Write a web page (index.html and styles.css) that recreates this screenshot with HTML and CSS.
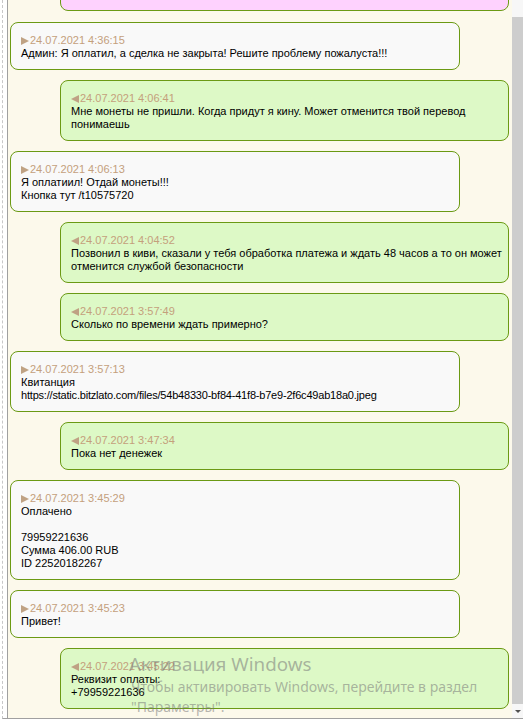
FILE: index.html
```html
<!DOCTYPE html>
<html lang="ru">
<head>
    <meta charset="UTF-8">
    <title>Сделка - чат</title>
    <link rel="stylesheet" href="styles.css">
</head>
<body>
    <div class="frame">
        <div class="rail"></div>
        <div class="chat">
            <div class="msg msg-system"></div>

            <div class="msg msg-in">
                <div class="time"><span class="dir"></span>24.07.2021 4:36:15</div>
                <div class="text">Админ: Я оплатил, а сделка не закрыта! Решите проблему пожалуста!!!</div>
            </div>
            <div class="msg msg-out">
                <div class="time"><span class="dir"></span>24.07.2021 4:06:41</div>
                <div class="text">Мне монеты не пришли. Когда придут я кину. Может отменится твой перевод понимаешь</div>
            </div>
            <div class="msg msg-in">
                <div class="time"><span class="dir"></span>24.07.2021 4:06:13</div>
                <div class="text">Я оплатиил! Отдай монеты!!!<br>Кнопка тут /t10575720</div>
            </div>
            <div class="msg msg-out">
                <div class="time"><span class="dir"></span>24.07.2021 4:04:52</div>
                <div class="text">Позвонил в киви, сказали у тебя обработка платежа и ждать 48 часов а то он может отменится службой безопасности</div>
            </div>
            <div class="msg msg-out">
                <div class="time"><span class="dir"></span>24.07.2021 3:57:49</div>
                <div class="text">Сколько по времени ждать примерно?</div>
            </div>
            <div class="msg msg-in">
                <div class="time"><span class="dir"></span>24.07.2021 3:57:13</div>
                <div class="text">Квитанция<br><span class="link">https://static.bitzlato.com/files/54b48330-bf84-41f8-b7e9-2f6c49ab18a0.jpeg</span></div>
            </div>
            <div class="msg msg-out">
                <div class="time"><span class="dir"></span>24.07.2021 3:47:34</div>
                <div class="text">Пока нет денежек</div>
            </div>
            <div class="msg msg-in">
                <div class="time"><span class="dir"></span>24.07.2021 3:45:29</div>
                <div class="text">Оплачено<br><br>79959221636<br>Сумма 406.00 RUB<br>ID 22520182267</div>
            </div>
            <div class="msg msg-in">
                <div class="time"><span class="dir"></span>24.07.2021 3:45:23</div>
                <div class="text">Привет!</div>
            </div>
            <div class="msg msg-out">
                <div class="time"><span class="dir"></span>24.07.2021 3:45:22</div>
                <div class="text">Реквизит оплаты:<br>+79959221636</div>
            </div>
        </div>
        <div class="scrollbar">
            <div class="scroll-thumb"></div>
            <div class="scroll-down"></div>
        </div>
    </div>

    <div class="activation">
        <div class="activation-title">Активация Windows</div>
        <div class="activation-text">Чтобы активировать Windows, перейдите в раздел<br>"Параметры".</div>
    </div>
</body>
</html>
```

FILE: styles.css
```css
* {
    margin: 0;
    padding: 0;
    box-sizing: border-box;
}
body {
    background-color: #ffffff;
    font-family: "Liberation Sans", Arial, sans-serif;
    width: 523px;
    height: 721px;
    overflow: hidden;
    position: relative;
}
.frame {
    display: flex;
    height: 719px;
    border-bottom: 1px solid #a0a0a0;
    border-left: 1px dashed #c8c8c8;
    margin-left: 2px;
    padding-left: 4px;
}
.rail {
    width: 1px;
    background-color: #a0a0a0;
    flex-shrink: 0;
}
.chat {
    flex: 1;
    background-color: #fcf9eb;
    padding: 0 3px 0 2px;
    overflow: hidden;
}
.msg {
    border: 1px solid #6b9a14;
    border-radius: 8px;
    padding: 11px 4px 9px 10px;
    margin-bottom: 10px;
    font-size: 11px;
    line-height: 13px;
    color: #000;
}
.msg-in {
    background-color: #f9f9f9;
    margin-right: 49px;
}
.msg-out {
    background-color: #ddf9c6;
    margin-left: 50px;
}
.msg-system {
    background-color: #fed2fe;
    margin-left: 50px;
    height: 40px;
    margin-top: -29px;
    margin-bottom: 11px;
}
.link {
    letter-spacing: -0.2px;
}
.time {
    color: #c4a07c;
    font-size: 11px;
}
.dir {
    display: inline-block;
    width: 0;
    height: 0;
    border-top: 4px solid transparent;
    border-bottom: 4px solid transparent;
    margin-right: 1px;
    vertical-align: -1px;
}
.msg-in .dir {
    border-left: 8px solid #bfa284;
}
.msg-out .dir {
    border-right: 8px solid #bfa284;
}
.scrollbar {
    width: 11px;
    flex-shrink: 0;
    background-color: #f7f7f7;
    display: flex;
    flex-direction: column;
    padding-top: 17px;
}
.scroll-thumb {
    flex: 1;
    background-color: #cdcdcd;
}
.scroll-down {
    height: 14px;
    display: flex;
    justify-content: center;
    align-items: center;
}
.scroll-down::before {
    content: '';
    border-left: 3px solid transparent;
    border-right: 3px solid transparent;
    border-top: 3px solid #505050;
}
.activation {
    position: absolute;
    left: 129px;
    top: 652px;
    color: rgba(120, 120, 120, 0.55);
    font-family: "Noto Sans", "Open Sans", sans-serif;
}
.activation-title {
    font-size: 18.8px;
    line-height: 25px;
}
.activation-text {
    font-size: 14px;
    line-height: 20px;
    padding-left: 2px;
}
```
